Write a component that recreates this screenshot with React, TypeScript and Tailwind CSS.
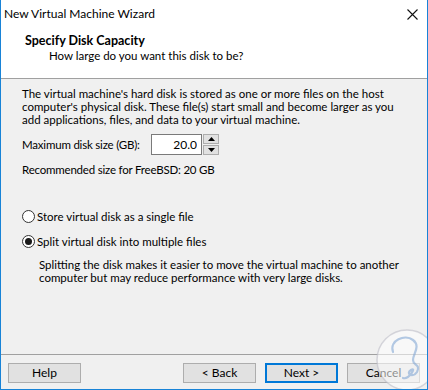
import React, { useState } from 'react';

const WizardButton: React.FC<{ label: string; primary?: boolean }> = ({ label, primary }) => (
    <button
        className={`w-[73px] h-[20px] flex items-center justify-center bg-[#e1e1e1] text-[12px] text-black leading-none ${primary ? 'border-2 border-[#0078d7]' : 'border border-[#adadad]'}`}
    >
        {label}
    </button>
);

const Radio: React.FC<{ checked: boolean; label: string; onClick: () => void }> = ({ checked, label, onClick }) => (
    <div className="flex items-center h-[15px] cursor-default" onClick={onClick}>
        <span className="w-[13px] h-[13px] rounded-full border border-[#333333] bg-white flex items-center justify-center mr-[2px]">
            {checked && <span className="w-[7px] h-[7px] rounded-full bg-[#1a1a1a]" />}
        </span>
        <span>{label}</span>
    </div>
);

const App: React.FC = () => {
    const [split, setSplit] = useState(true);
    const [size, setSize] = useState('20.0');

    const bump = (d: number) => setSize(s => (Math.max(0.1, parseFloat(s) + d)).toFixed(1));

    return (
        <div className="relative w-[428px] h-[390px] flex flex-col bg-[#f0f0f0] border-x border-b border-[#1883d7] text-[11.5px] text-black overflow-hidden" style={{ fontFamily: 'Lato, "Liberation Sans", sans-serif' }}>
            {/* title bar */}
            <div className="h-[27px] bg-white flex items-center justify-between pl-[3px] pr-[9px]">
                <span className="text-[12px]">New Virtual Machine Wizard</span>
                <svg width="11" height="11" viewBox="0 0 11 11" className="mt-[1px]">
                    <path d="M0.5 0.5 L10.5 10.5 M10.5 0.5 L0.5 10.5" stroke="#111" strokeWidth="1.1" />
                </svg>
            </div>

            {/* header */}
            <div className="h-[52px] bg-white border-b border-[#a0a0a0] pt-[6px] pl-[24px] leading-[15px]">
                <div className="font-bold text-[12.5px]">Specify Disk Capacity</div>
                <div className="pl-[24px]">How large do you want this disk to be?</div>
            </div>

            {/* body */}
            <div className="flex-1 flex flex-col px-[21px] pt-[8px] leading-[13px]">
                <p className="whitespace-nowrap">
                    The virtual machine's hard disk is stored as one or more files on the host<br />
                    computer's physical disk. These file(s) start small and become larger as you<br />
                    add applications, files, and data to your virtual machine.
                </p>

                <div className="flex items-center mt-[8px] h-[21px]">
                    <span className="w-[129px] tracking-[-0.2px]">Maximum disk size (GB):</span>
                    <input
                        value={size}
                        onChange={e => setSize(e.target.value)}
                        className="w-[51px] h-[21px] border border-[#7a7a7a] bg-white text-right pr-[4px] outline-none text-[12px]"
                    />
                    <div className="flex flex-col ml-[1px] h-[21px] justify-between">
                        <button onClick={() => bump(1)} className="w-[16px] h-[10px] bg-[#e1e1e1] border border-[#adadad] flex items-center justify-center">
                            <svg width="7" height="4" viewBox="0 0 7 4"><path d="M0 4 L3.5 0 L7 4 Z" fill="#000" /></svg>
                        </button>
                        <button onClick={() => bump(-1)} className="w-[16px] h-[10px] bg-[#e1e1e1] border border-[#adadad] flex items-center justify-center">
                            <svg width="7" height="4" viewBox="0 0 7 4"><path d="M0 0 L7 0 L3.5 4 Z" fill="#000" /></svg>
                        </button>
                    </div>
                </div>

                <div className="mt-[8px] tracking-[-0.2px]">Recommended size for FreeBSD: 20 GB</div>

                <div className="mt-[33px] flex flex-col gap-[10px]">
                    <Radio checked={!split} label="Store virtual disk as a single file" onClick={() => setSplit(false)} />
                    <Radio checked={split} label="Split virtual disk into multiple files" onClick={() => setSplit(true)} />
                </div>

                <p className="mt-[9px] pl-[17px] whitespace-nowrap">
                    Splitting the disk makes it easier to move the virtual machine to another<br />
                    computer but may reduce performance with very large disks.
                </p>
            </div>

            {/* footer */}
            <div className="h-[35px] border-t border-[#a0a0a0] flex items-start pt-[8px] px-[7px]">
                <WizardButton label="Help" />
                <div className="flex-1" />
                <div className="flex gap-[9px]">
                    <WizardButton label="< Back" />
                    <WizardButton label="Next >" primary />
                    <WizardButton label="Cancel" />
                </div>
            </div>

            {/* watermark */}
            <svg className="absolute left-[374px] top-[328px] pointer-events-none" width="64" height="64" viewBox="0 0 64 64">
                <circle cx="32" cy="32" r="30" fill="rgba(255,255,255,0.55)" stroke="rgba(190,190,200,0.6)" strokeWidth="1.5" />
                <path d="M18 24 C14 12 30 6 38 12 C46 18 38 26 38 32 C38 38 46 36 42 44 C38 50 30 46 36 42 C42 38 34 52 28 50"
                    fill="none" stroke="rgba(120,160,210,0.55)" strokeWidth="2.2" strokeLinecap="round" />
            </svg>
        </div>
    );
};

export default App;
